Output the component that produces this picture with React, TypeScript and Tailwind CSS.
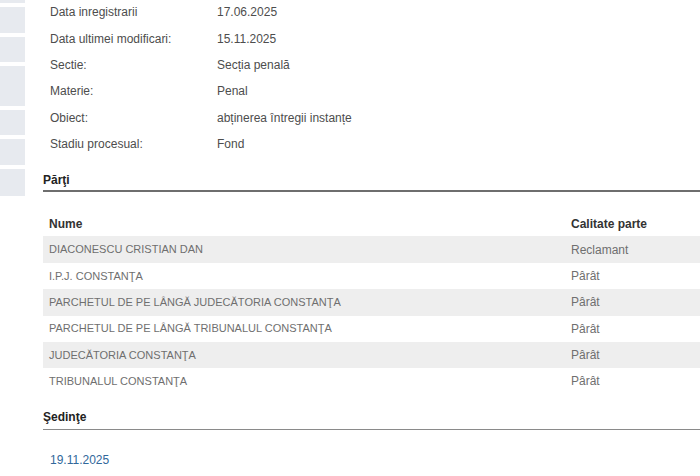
const info: [string, string][] = [
  ['Data inregistrarii', '17.06.2025'],
  ['Data ultimei modificari:', '15.11.2025'],
  ['Sectie:', 'Secția penală'],
  ['Materie:', 'Penal'],
  ['Obiect:', 'abținerea întregii instanțe'],
  ['Stadiu procesual:', 'Fond'],
]

const parti: [string, string][] = [
  ['DIACONESCU CRISTIAN DAN', 'Reclamant'],
  ['I.P.J. CONSTANŢA', 'Pârât'],
  ['PARCHETUL DE PE LÂNGĂ JUDECĂTORIA CONSTANŢA', 'Pârât'],
  ['PARCHETUL DE PE LÂNGĂ TRIBUNALUL CONSTANŢA', 'Pârât'],
  ['JUDECĂTORIA CONSTANŢA', 'Pârât'],
  ['TRIBUNALUL CONSTANŢA', 'Pârât'],
]

// left rail blocks, heights in px (page is scrolled, first one is cut)
const rail = [3, 26, 25, 40, 25, 26, 27]

export default function App() {
  return (
    <div
      className="flex h-[476px] w-[700px] overflow-hidden bg-white text-[12px]"
      style={{ fontFamily: '"Liberation Sans", Arial, sans-serif' }}
    >
      {/* side rail */}
      <div className="flex w-[25px] shrink-0 flex-col gap-[4px]">
        {rail.map((h, i) => (
          <div key={i} className="w-full bg-[#e7eaef]" style={{ height: h }} />
        ))}
      </div>

      <div className="ml-[18px] flex min-w-0 flex-1 flex-col">
        {/* case details */}
        <div className="mt-[-1px] flex flex-col text-[#4d4d4d]">
          {info.map(([label, value]) => (
            <div key={label} className="flex h-[26.4px] items-center pl-[7px]">
              <span className="w-[167px] shrink-0">{label}</span>
              <span>{value}</span>
            </div>
          ))}
        </div>

        {/* Parti */}
        <div className="mt-[16px] border-b-[2px] border-[#6e6e6e] pb-[2px]">
          <h3 className="font-bold leading-[15px] text-[#222]">Părţi</h3>
        </div>

        <div className="mt-[23px] flex flex-col">
          <div className="flex h-[18px] items-center pl-[6px] font-bold text-[#333]">
            <span className="w-[522px] shrink-0">Nume</span>
            <span>Calitate parte</span>
          </div>
          <div className="mt-[3px] flex flex-col text-[#6f6f6f]">
            {parti.map(([name, role], i) => (
              <div
                key={name}
                className={
                  i % 2 === 0
                    ? 'flex h-[26.4px] items-center bg-[#eeeeee] pl-[6px]'
                    : 'flex h-[26.4px] items-center bg-white pl-[6px]'
                }
              >
                <span className="w-[522px] shrink-0 text-[11px]">{name}</span>
                <span>{role}</span>
              </div>
            ))}
          </div>
        </div>

        {/* Sedinte */}
        <div className="mt-[15px] border-b border-[#8a8a8a] pb-[4px]">
          <h3 className="font-bold leading-[15px] text-[#222]">Şedinţe</h3>
        </div>

        <div className="mt-[21px] pl-[7px]">
          <a className="text-[#31689b]">19.11.2025</a>
        </div>
      </div>
    </div>
  )
}
